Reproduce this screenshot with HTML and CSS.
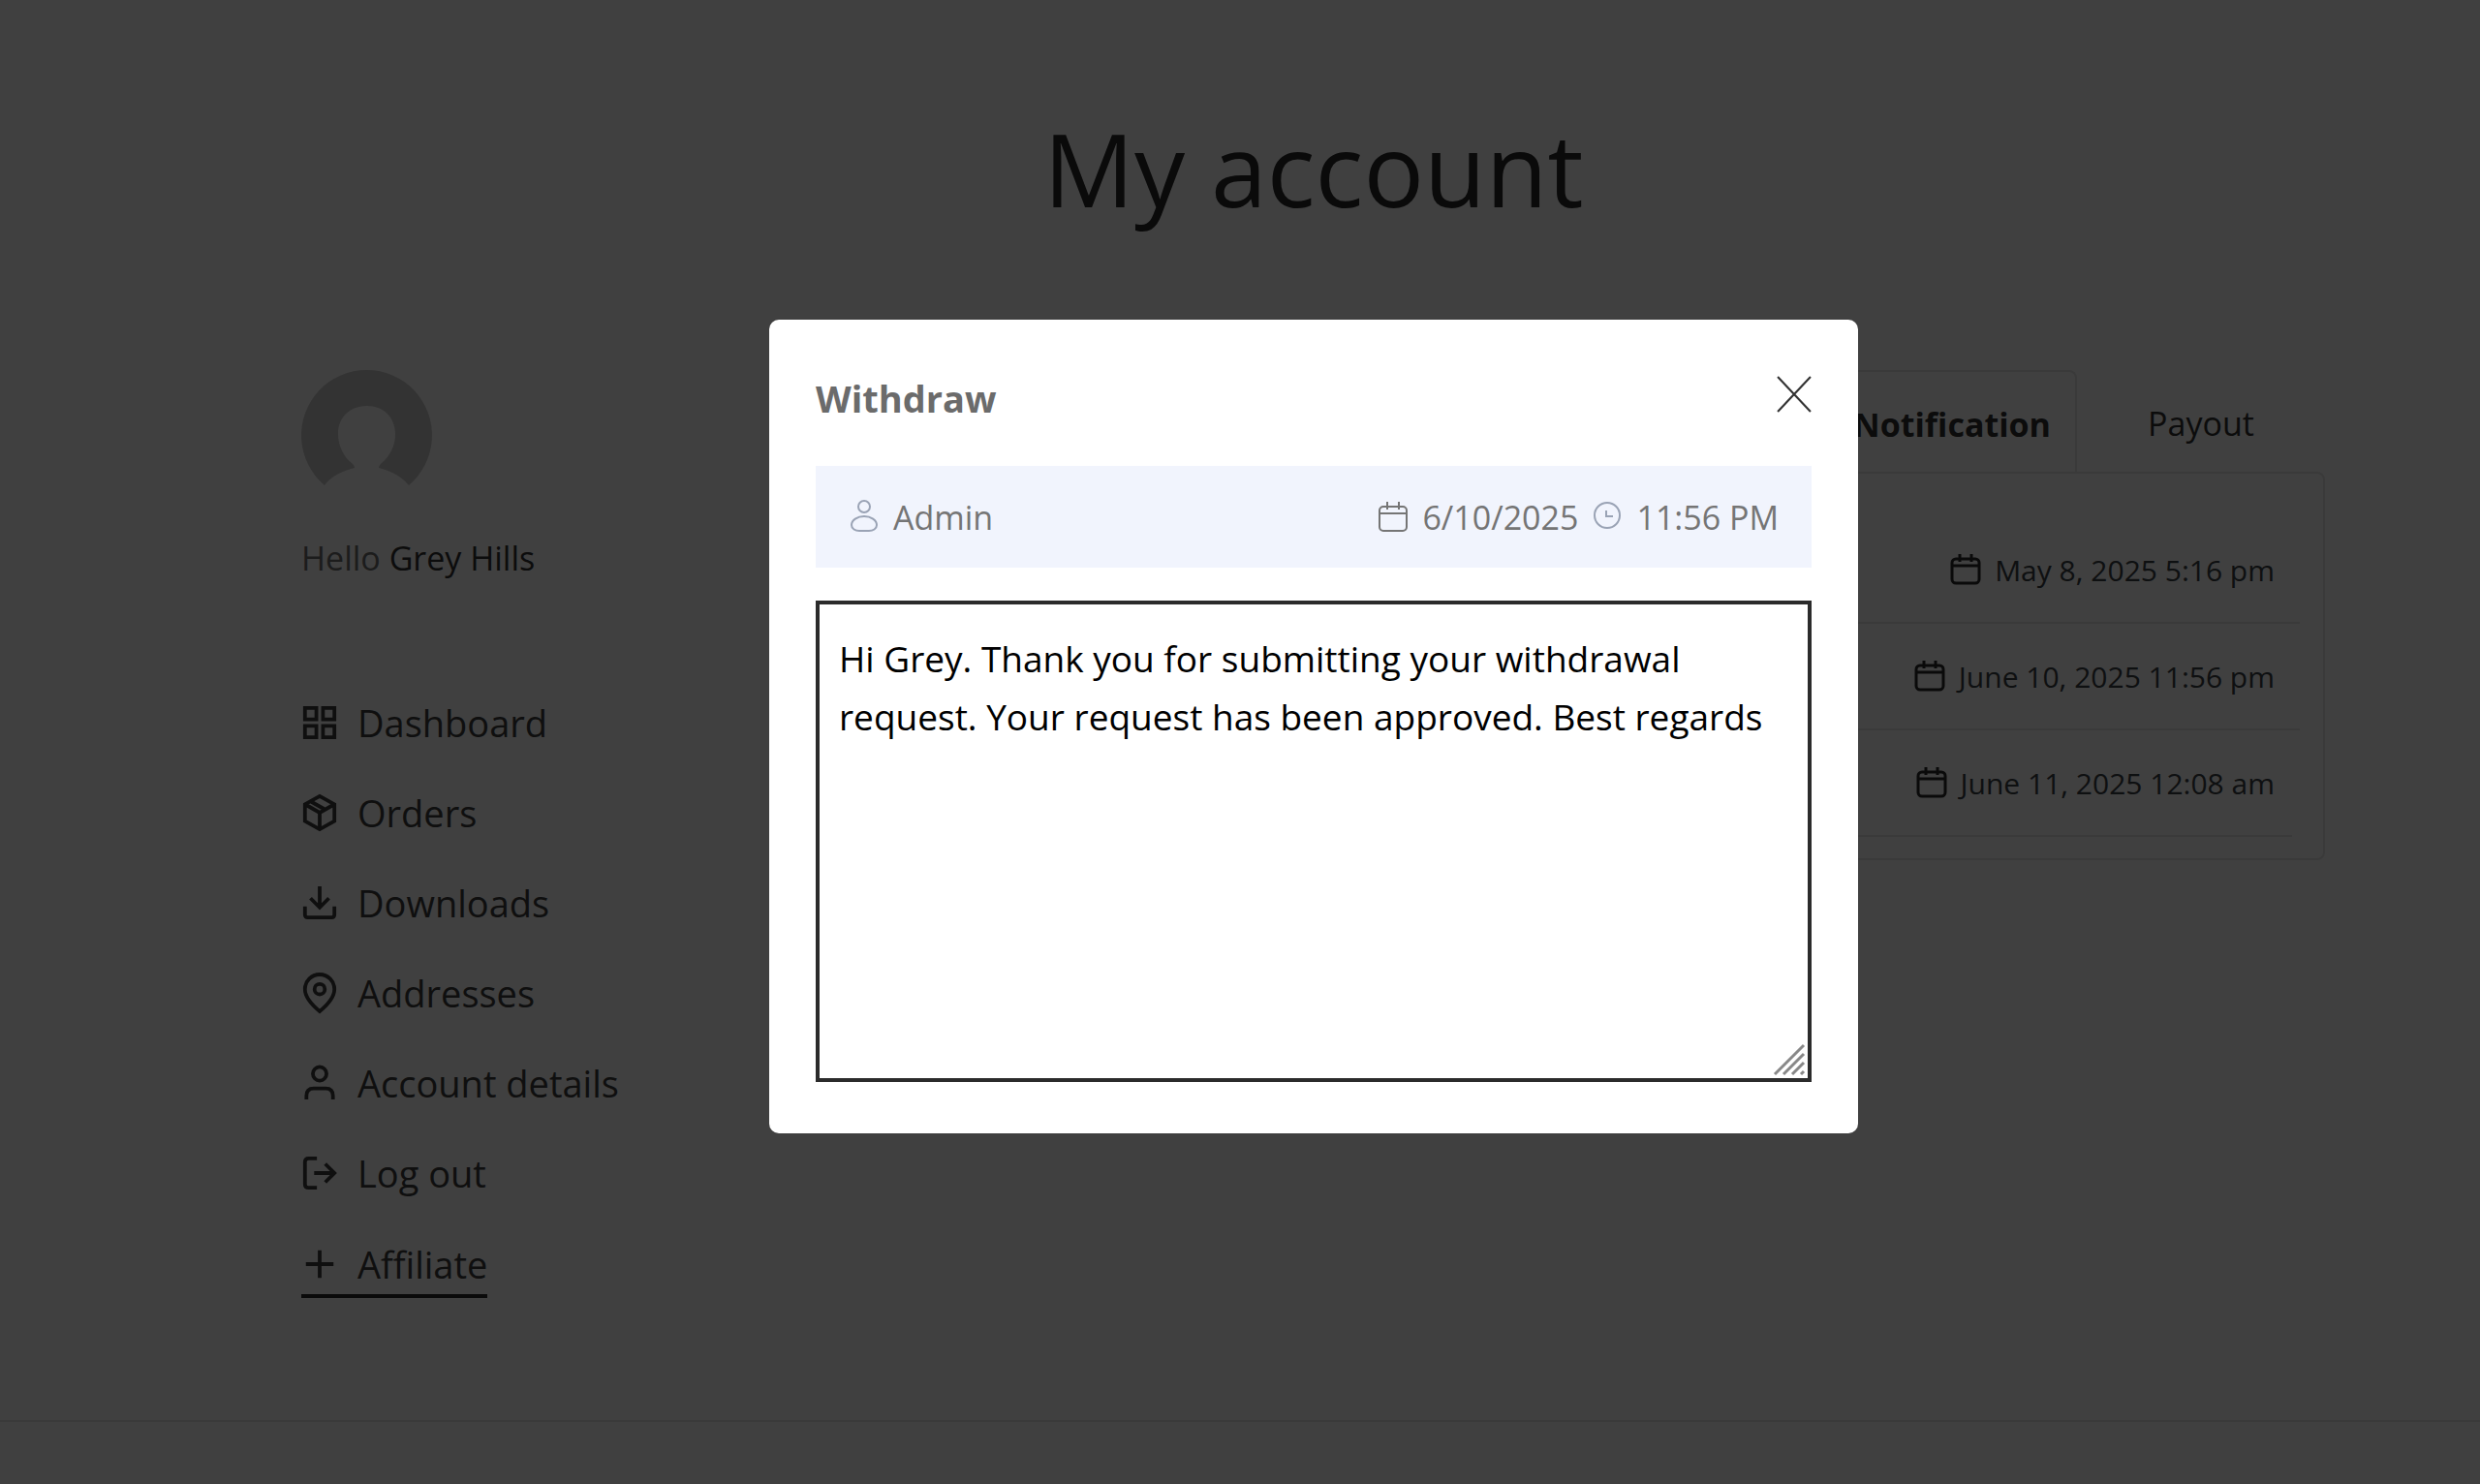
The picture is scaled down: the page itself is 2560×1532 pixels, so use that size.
FILE: index.html
```
<!DOCTYPE html>
<html lang="en">
<head>
    <meta charset="UTF-8">
    <meta name="viewport" content="width=device-width, initial-scale=1.0">
    <title>My account</title>
    <link rel="stylesheet" href="styles.css">
</head>
<body>
    <!-- shared icons -->
    <svg class="sprite" aria-hidden="true">
        <symbol id="calendar" viewBox="0 0 32 32">
            <rect x="2" y="5" width="28" height="25" rx="4"/>
            <path d="M2 12h28M10 0v8M22 0v8"/>
        </symbol>
    </svg>

    <div class="page">
        <h1>My account</h1>
        <main class="account">
            <aside class="sidebar">
                <svg class="avatar" viewBox="0 0 135 135" aria-hidden="true">
                    <path fill-rule="evenodd" d="M24 119A67.5 67.5 0 1 1 111 119C103 109 92 104 80 101C80 99 81 98 83 96C92 88 97 78 97 66C97 48 84 37 68 37C51 37 38 48 38 66C38 78 44 90 52 96C54 98 55 99 55 101C43 104 31 109 24 119Z"/>
                </svg>
                <p class="hello">Hello <strong>Grey Hills</strong></p>
                <nav>
                    <ul class="menu">
                        <li><a href="#dashboard">
                            <svg viewBox="2 2 20 20"><path d="M4 4h6.2v6.2H4zM13.8 4H20v6.2h-6.2zM4 13.8h6.2V20H4zM13.8 13.8H20V20h-6.2z"/></svg>
                            Dashboard</a></li>
                        <li><a href="#orders">
                            <svg viewBox="2 2 20 20"><path d="M12 3l8 4.4v9.2L12 21l-8-4.4V7.4zM4 7.4l8 4.6l8-4.6M12 12v9M7 5.8l8 4.5"/></svg>
                            Orders</a></li>
                        <li><a href="#downloads">
                            <svg viewBox="2 2 20 20"><path d="M4 14v4.5q0 1.5 1.5 1.5h13q1.5 0 1.5-1.5V14M12 3v11M7 9.5l5 5l5-5"/></svg>
                            Downloads</a></li>
                        <li><a href="#addresses">
                            <svg viewBox="2 2 20 20"><path d="M12 22C9 19.5 4 14.5 4 10a8 8 0 0 1 16 0c0 4.5-5 9.5-8 12z"/><circle cx="12" cy="10" r="2.8"/></svg>
                            Addresses</a></li>
                        <li><a href="#details">
                            <svg viewBox="2 2 20 20"><circle cx="12" cy="7" r="3.7"/><path d="M4.8 21v-2q0-4 4-4h6.4q4 0 4 4v2"/></svg>
                            Account details</a></li>
                        <li><a href="#logout">
                            <svg viewBox="2 2 20 20"><path d="M10.5 4H6Q4 4 4 6v12q0 2 2 2h4.5M9 12h11M15 7l5 5l-5 5"/></svg>
                            Log out</a></li>
                        <li><a class="current" href="#affiliate">
                            <svg viewBox="2 2 20 20"><path d="M12 4.5v15M4.5 12h15"/></svg>
                            Affiliate</a></li>
                    </ul>
                </nav>
            </aside>

            <section class="content">
                <div class="tabs">
                    <button class="tab active">Notification</button>
                    <button class="tab">Payout</button>
                </div>
                <ul class="panel">
                    <li><svg><use href="#calendar"/></svg>May 8, 2025 5:16 pm</li>
                    <li><svg><use href="#calendar"/></svg>June 10, 2025 11:56 pm</li>
                    <li><svg><use href="#calendar"/></svg>June 11, 2025 12:08 am</li>
                </ul>
            </section>
        </main>
        <footer></footer>
    </div>

    <div class="overlay">
        <div class="modal" role="dialog" aria-labelledby="modal-title">
            <div class="modal-head">
                <h2 id="modal-title">Withdraw</h2>
                <button class="close" aria-label="Close">
                    <svg viewBox="0 0 34 34"><path d="M1 0l32 34M33 0L1 34"/></svg>
                </button>
            </div>
            <div class="meta">
                <span class="author">
                    <svg class="blue" viewBox="0 0 32 32"><circle cx="16" cy="5" r="6"/><path d="M16 15c7 0 13 4 13 9c0 4-4 6-8 6H11c-4 0-8-2-8-6c0-5 6-9 13-9z"/></svg>
                    Admin
                </span>
                <span><svg><use href="#calendar"/></svg>6/10/2025</span>
                <span><svg class="blue" viewBox="0 0 32 32"><circle cx="16" cy="14" r="13"/><path d="M15 9v6h7"/></svg>11:56 PM</span>
            </div>
            <div class="message">
                <textarea aria-label="Message">Hi Grey. Thank you for submitting your withdrawal request. Your request has been approved. Best regards</textarea>
                <svg class="grip" viewBox="0 0 34 34" aria-hidden="true"><path d="M2 32L32 2M11 32L32 11M20 32L32 20M29 32L32 29"/></svg>
            </div>
        </div>
    </div>
</body>
</html>
```
FILE: styles.css
```
* {
    box-sizing: border-box;
}

body {
    margin: 0;
    background-color: #fff;
    color: #3c3c3c;
    font-family: "Open Sans", "Noto Sans", sans-serif;
}

h1, h2, p, ul {
    margin: 0;
    padding: 0;
    font-weight: normal;
}

ul {
    list-style: none;
}

button {
    border: none;
    background: none;
    padding: 0;
    font-family: inherit;
    color: inherit;
}

svg {
    flex: none;
    fill: none;
    stroke: currentColor;
    overflow: visible;
}

.sprite {
    display: none;
}

/* account page */
h1 {
    padding: 102px 0 0 152px;
    font-size: 104px;
    line-height: 144px;
    text-align: center;
    color: #282828;
}

.account {
    display: flex;
    align-items: flex-start;
    gap: 160px;
    padding: 136px 160px 0 311px;
}

.sidebar {
    width: 400px;
}

.avatar {
    display: block;
    width: 135px;
    height: 135px;
    fill: #cbcbcb;
    stroke: none;
}

.hello {
    margin-top: 35px;
    font-size: 34px;
    line-height: 48px;
    color: #707070;
}

.hello strong {
    font-weight: normal;
    color: #333;
}

.menu {
    display: flex;
    flex-direction: column;
    align-items: flex-start;
    gap: 33px;
    margin-top: 116px;
}

.menu a {
    display: flex;
    align-items: center;
    gap: 20px;
    height: 60px;
    font-size: 38px;
    white-space: nowrap;
    color: inherit;
    text-decoration: none;
}

.menu svg {
    width: 38px;
    height: 38px;
    stroke-width: 2;
}

.menu .current {
    height: 66px;
    padding-bottom: 1px;
    border-bottom: 4px solid #2a2a2a;
}

.content {
    flex: 1;
}

.tabs {
    display: flex;
    justify-content: flex-end;
}

.tab {
    width: 256px;
    height: 105px;
    padding-top: 5px;
    font-size: 34px;
    color: #333;
}

.tab.active {
    width: 258px;
    margin-bottom: -2px;
    border: 2px solid #e6e6e6;
    border-bottom: none;
    border-radius: 8px 8px 0 0;
    background-color: #fff;
    font-weight: bold;
    position: relative;
}

.panel {
    padding: 45px 24px 22px;
    border: 2px solid #e6e6e6;
    border-radius: 0 8px 8px 8px;
    font-size: 30px;
    color: #3b4045;
}

.panel li {
    display: flex;
    justify-content: flex-end;
    align-items: center;
    gap: 14px;
    height: 110px;
    padding-right: 26px;
    border-bottom: 2px solid #e6e6e6;
}

.panel li:last-child {
    margin-right: 8px;
    padding-right: 18px;
}

.panel svg {
    width: 32px;
    height: 32px;
    color: #2a2a2a;
    stroke-width: 3;
}

footer {
    margin-top: 126px;
    border-top: 2px solid #e8e8e8;
    height: 64px;
}

/* popup */
.overlay {
    position: fixed;
    inset: 0;
    display: flex;
    justify-content: center;
    align-items: flex-start;
    padding: 330px 0 0 152px;
    background-color: rgba(0, 0, 0, .75);
}

.modal {
    width: 1124px;
    padding: 47px 48px 53px;
    border-radius: 10px;
    background-color: #fff;
    color: #757575;
}

.modal-head {
    display: flex;
    justify-content: space-between;
    height: 104px;
}

h2 {
    padding-top: 8px;
    font-size: 38px;
    line-height: 52px;
    font-weight: bold;
    color: #6b6b6b;
}

.close {
    height: 60px;
    color: #333;
}

.close svg {
    display: block;
    width: 36px;
    height: 36px;
    stroke-width: 2;
}

.meta {
    display: flex;
    align-items: center;
    gap: 14px;
    height: 105px;
    padding: 0 34px;
    background-color: #f1f4fd;
    font-size: 34px;
}

.meta span {
    display: flex;
    align-items: center;
    gap: 14px;
}

.meta .author {
    flex: 1;
}

.meta svg {
    width: 32px;
    height: 32px;
    stroke-width: 2;
}

.meta .blue {
    color: #9aa3b5;
}

.message {
    position: relative;
    margin-top: 34px;
}

textarea {
    display: block;
    width: 100%;
    height: 497px;
    padding: 26px 20px;
    border: 4px solid #2b2b2b;
    outline: none;
    resize: none;
    font-family: inherit;
    font-size: 37px;
    line-height: 60px;
    color: #000;
}

.grip {
    position: absolute;
    right: 6px;
    bottom: 6px;
    width: 34px;
    height: 34px;
    color: #888;
    stroke-width: 3;
}
```
